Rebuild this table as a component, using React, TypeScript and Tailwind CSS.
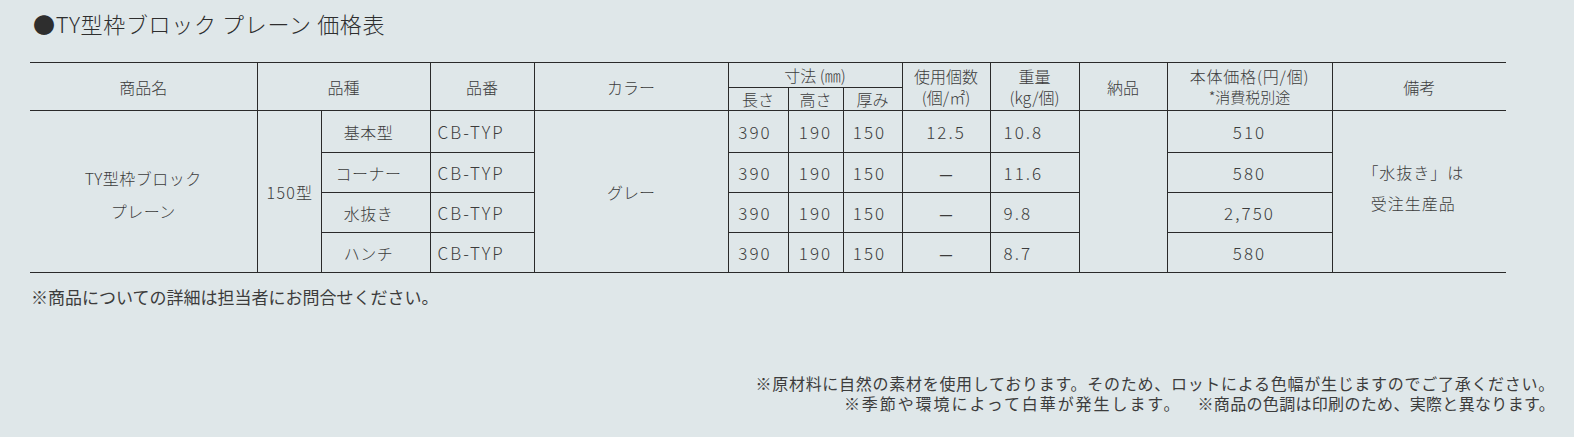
import React from "react";

const B = "border-[#2a2a2a]";

export default function App() {
  const rows = [
    { kind: "基本型", use: "12.5", weight: "10.8", price: "510" },
    { kind: "コーナー", use: "−", weight: "11.6", price: "580" },
    { kind: "水抜き", use: "−", weight: "9.8", price: "2,750" },
    { kind: "ハンチ", use: "−", weight: "8.7", price: "580" },
  ];
  const num = "tracking-[0.12em] text-[17px]";
  const heights = ["h-[42px]", "h-[40px]", "h-[40px]", "h-[40px]"];
  return (
    <div
      className="w-[1574px] h-[437px] bg-[#dfe7e9] text-[#3c3c3c] overflow-hidden"
      style={{ fontFamily: '"Noto Sans CJK JP", "Noto Sans", sans-serif' }}
    >
      <div className="pl-[33px] pt-[9px] h-[62px]">
        <h1 className="text-[22px] leading-[28px] font-light tracking-[0.03em] text-[#2e2e2e]">
          ●TY型枠ブロック プレーン 価格表
        </h1>
      </div>
      <div className="pl-[30px]">
        <table className={`table-fixed border-collapse w-[1476px] border-t border-b ${B} font-light`}>
          <colgroup>
            <col className="w-[227px]" />
            <col className="w-[64px]" />
            <col className="w-[109px]" />
            <col className="w-[104px]" />
            <col className="w-[194px]" />
            <col className="w-[60px]" />
            <col className="w-[55px]" />
            <col className="w-[59px]" />
            <col className="w-[88px]" />
            <col className="w-[89px]" />
            <col className="w-[88px]" />
            <col className="w-[165px]" />
            <col className="w-[174px]" />
          </colgroup>
          <thead className="text-[16px] font-light">
            <tr className="h-[25px]">
              <th rowSpan={2} className={`font-light border-r ${B}`}>商品名</th>
              <th rowSpan={2} colSpan={2} className={`font-light border-r ${B}`}>品種</th>
              <th rowSpan={2} className={`font-light border-r ${B}`}>品番</th>
              <th rowSpan={2} className={`font-light border-r ${B}`}>カラー</th>
              <th colSpan={3} className={`font-light border-r border-b ${B} leading-[22px]`}>寸法 (㎜)</th>
              <th rowSpan={2} className={`font-light border-r ${B} leading-[21px]`}>
                使用個数<br />(個/㎡)
              </th>
              <th rowSpan={2} className={`font-light border-r ${B} leading-[21px]`}>
                重量<br />(kg/個)
              </th>
              <th rowSpan={2} className={`font-light border-r ${B}`}>納品</th>
              <th rowSpan={2} className={`font-light border-r ${B} leading-[20px]`}>
                <span className="tracking-[0.05em]">本体価格(円/個)</span>
                <br />
                <span className="text-[15px]">*消費税別途</span>
              </th>
              <th rowSpan={2} className="font-light">備考</th>
            </tr>
            <tr className={`h-[23px] border-b ${B}`}>
              <th className={`font-light border-r ${B} leading-[22px]`}>長さ</th>
              <th className={`font-light border-r ${B} leading-[22px]`}>高さ</th>
              <th className={`font-light border-r ${B} leading-[22px]`}>厚み</th>
            </tr>
          </thead>
          <tbody className="text-[16px] text-center">
            {rows.map((r, i) => {
              const last = i === rows.length - 1;
              const c = `border-r ${B} ${last ? "" : "border-b"}`;
              return (
                <tr key={i} className={heights[i]}>
                  {i === 0 && (
                    <>
                      <td rowSpan={4} className={`border-r ${B} leading-[33px] text-[16px] tracking-[0.03em] pt-[6px]`}>
                        TY型枠ブロック
                        <br />
                        プレーン
                      </td>
                      <td rowSpan={4} className={`border-r ${B} text-[16px] tracking-[0.08em] pl-[2px]`}>
                        150型
                      </td>
                    </>
                  )}
                  <td className={`${c} pr-[14px] tracking-[0.03em]`}>{r.kind}</td>
                  <td className={`${c} ${num} text-left pl-[7px]`}>CB-TYP</td>
                  {i === 0 && (
                    <td rowSpan={4} className={`border-r ${B}`}>
                      グレー
                    </td>
                  )}
                  <td className={`${c} ${num} pr-[6px]`}>390</td>
                  <td className={`${c} ${num}`}>190</td>
                  <td className={`${c} ${num} pr-[6px]`}>150</td>
                  <td className={`${c} ${num}`}>
                    {r.use === "−" ? <span className="font-medium text-[15px] tracking-normal">—</span> : r.use}
                  </td>
                  <td className={`${c} ${num} text-left pl-[13px]`}>{r.weight}</td>
                  {i === 0 && <td rowSpan={4} className={`border-r ${B}`}></td>}
                  <td className={`${c} ${num}`}>{r.price}</td>
                  {i === 0 && (
                    <td rowSpan={4} className="leading-[31px] text-[16px] tracking-[0.06em] pr-[12px] pb-[8px]">
                      「水抜き」は
                      <br />
                      受注生産品
                    </td>
                  )}
                </tr>
              );
            })}
          </tbody>
        </table>
      </div>
      <p className="pl-[31px] pt-[12px] text-[17px] leading-[24px]">
        ※商品についての詳細は担当者にお問合せください。
      </p>
      <div className="pr-[19px] pt-[64px] text-right text-[16px] leading-[20px]">
        <p className="tracking-[0.045em]">
          ※原材料に自然の素材を使用しております。そのため、ロットによる色幅が生じますのでご了承ください。
        </p>
        <p>
          <span className="tracking-[0.12em]">※季節や環境によって白華が発生します。</span>
          <span className="ml-[16px] tracking-[0.02em]">※商品の色調は印刷のため、実際と異なります。</span>
        </p>
      </div>
    </div>
  );
}
